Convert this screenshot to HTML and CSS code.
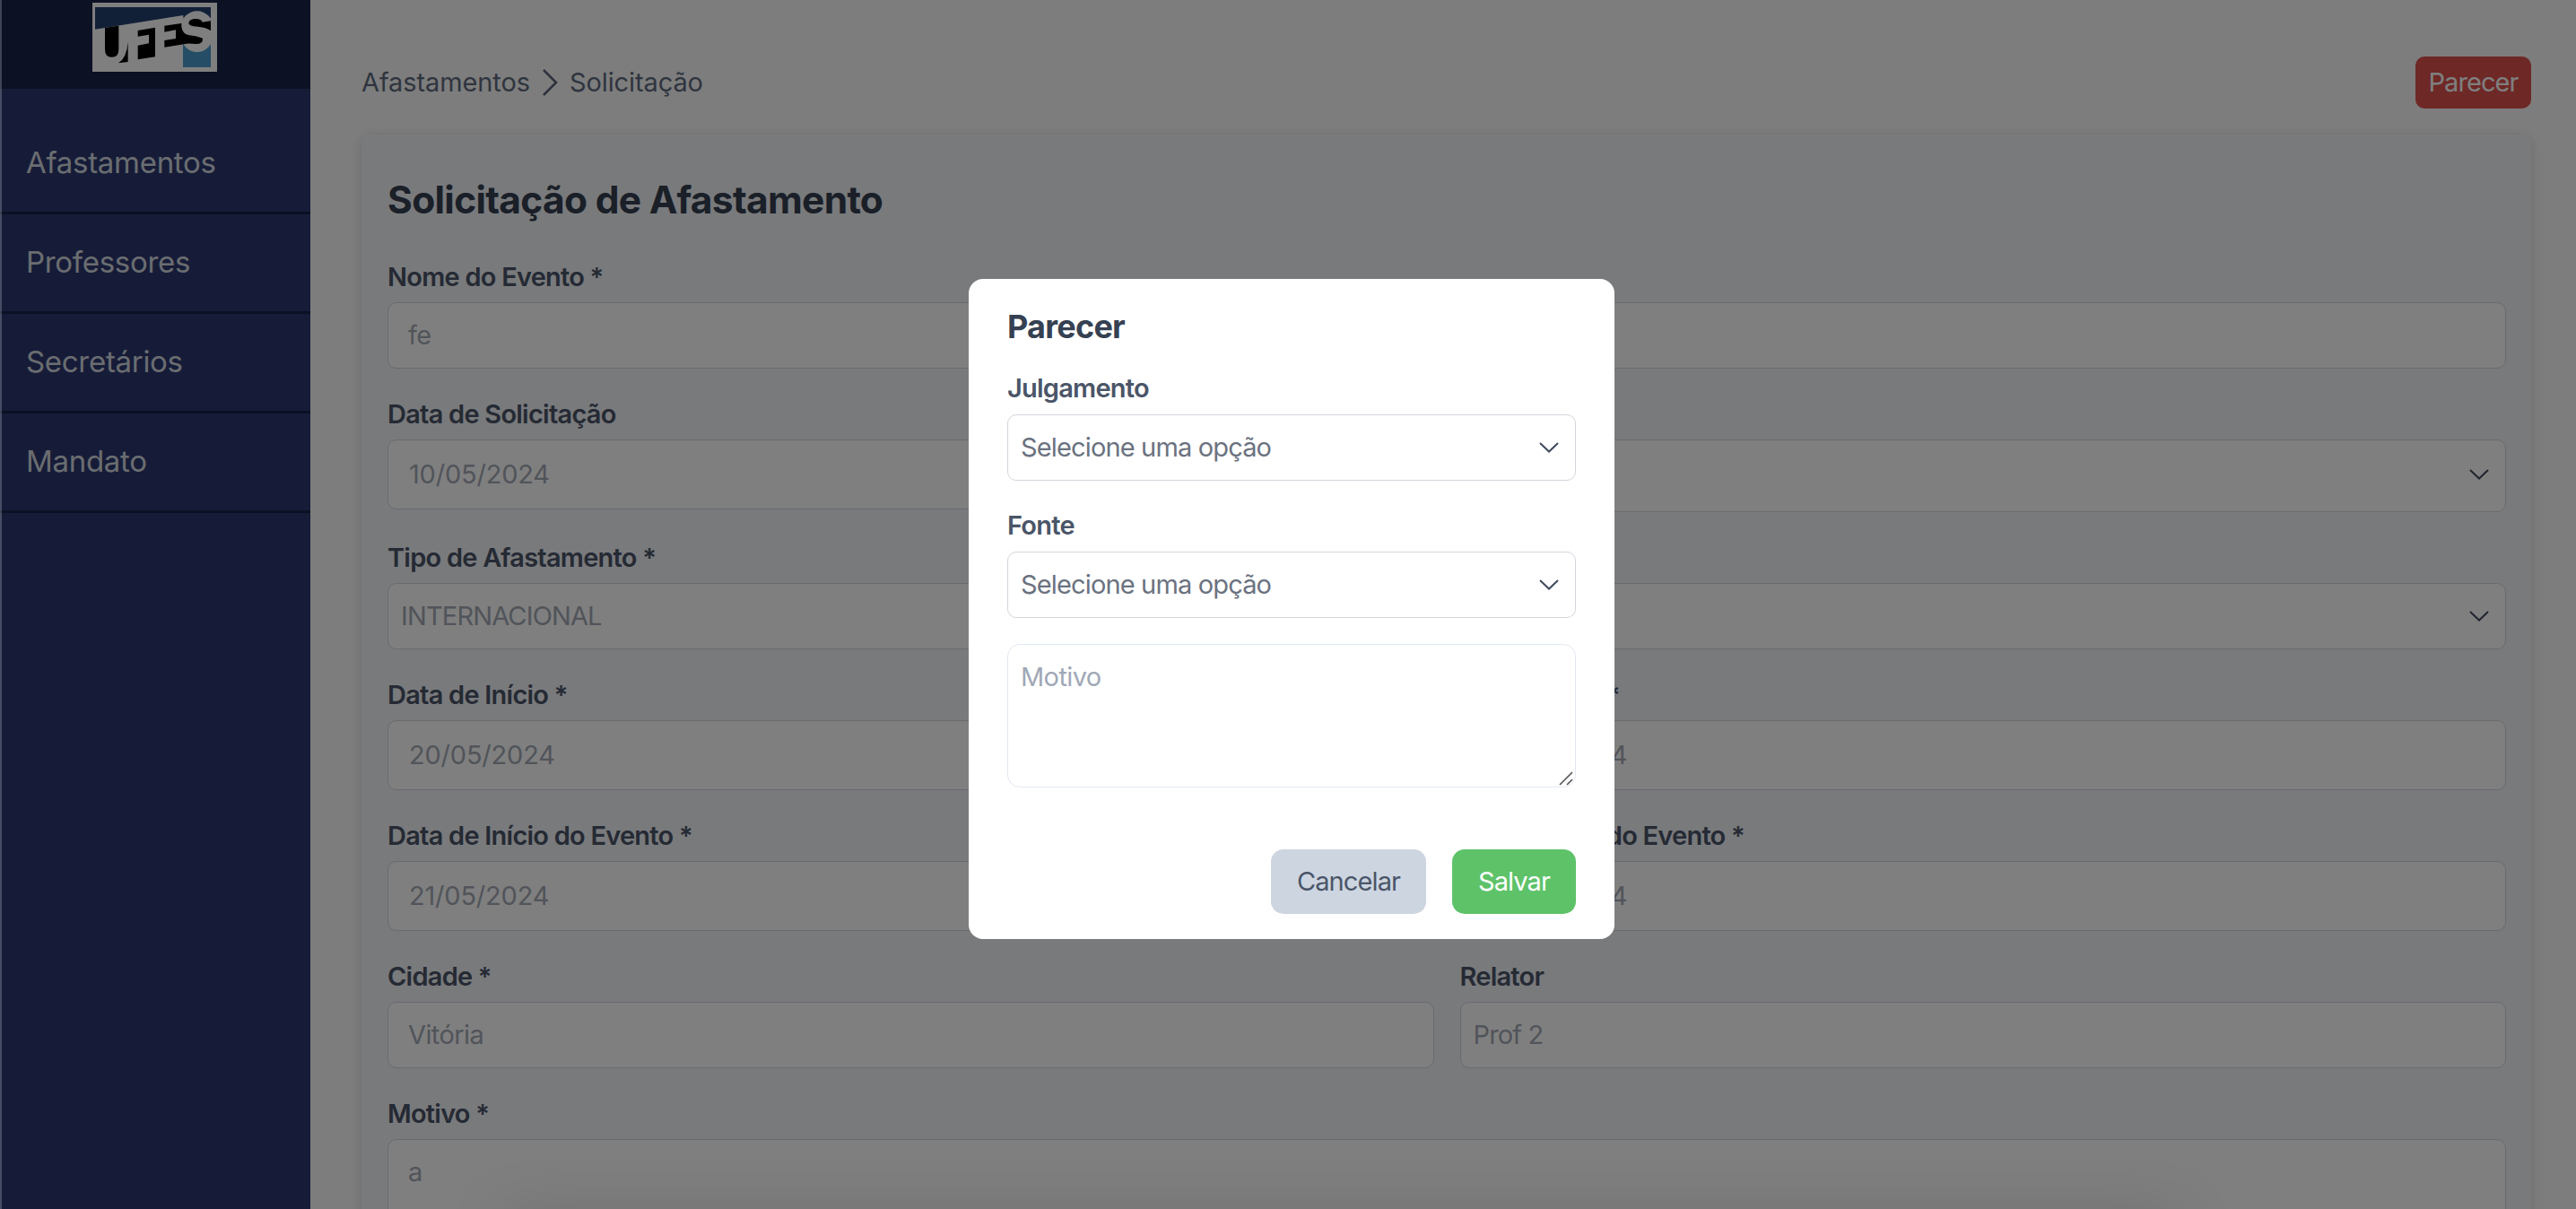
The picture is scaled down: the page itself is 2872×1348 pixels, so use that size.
FILE: index.html
```
<!DOCTYPE html>
<html lang="pt-BR">
<head>
<meta charset="utf-8">
<title>Solicitação de Afastamento</title>
<link rel="stylesheet" href="styles.css">
</head>
<body>
<div class="app">
  <aside class="sidebar">
    <div class="brand">
      <svg class="logo" viewBox="0 0 417 231" role="img" aria-label="UFES">
        <rect width="417" height="231" fill="#fff"/>
        <path d="M9 15H396V52H304V42L9 89Z" fill="#24406e"/>
        <rect x="303" y="130" width="93" height="86" fill="#4b9ccc"/>
        <path d="M42 84L88 77V155Q88 182 65 182Q42 182 42 155Z"/>
        <path d="M119 131V198L87 202Q115 184 119 131Z"/>
        <path d="M152 93L210 83V181L152 190V143L189 136V107L152 113Z"/>
        <circle cx="350" cy="82" r="54" fill="#fff"/>
        <circle cx="350" cy="112" r="53" fill="#fff"/>
        <path d="M241 77L298 69Q296 105 325 109Q350 111 369 119Q370 139 345 138Q325 135 315 137L241 149V126L279 120V91L241 98Z"/>
        <path d="M322 68Q324 54 346 54Q364 54 368 65L396 61V94Q386 84 352 80Q322 78 322 68Z"/>
      </svg>
    </div>
    <nav class="nav">
      <a class="nav-item">Afastamentos</a>
      <a class="nav-item">Professores</a>
      <a class="nav-item">Secretários</a>
      <a class="nav-item">Mandato</a>
    </nav>
  </aside>
  <main class="main">
    <header class="topbar">
      <div class="crumbs">
        <span>Afastamentos</span>
        <svg class="crumb-sep" viewBox="0 0 18 32"><path d="M2 2L16 16L2 30"/></svg>
        <span>Solicitação</span>
      </div>
      <button class="btn-parecer">Parecer</button>
    </header>
    <section class="card">
      <h1 class="title">Solicitação de Afastamento</h1>
      <div class="row">
        <div class="field"><label class="label">Nome do Evento *</label><div class="input">fe</div></div>
      </div>
      <div class="row">
        <div class="field"><label class="label">Data de Solicitação</label><div class="input date">10/05/2024</div></div>
        <div class="field"><label class="label">&nbsp;</label><div class="input status"><svg class="chevron" viewBox="0 0 22 12"><path d="M1 1L11 10.5L21 1"/></svg></div></div>
      </div>
      <div class="row">
        <div class="field"><label class="label">Tipo de Afastamento *</label><div class="input select">INTERNACIONAL</div></div>
        <div class="field"><label class="label">&nbsp;</label><div class="input select"><svg class="chevron" viewBox="0 0 22 12"><path d="M1 1L11 10.5L21 1"/></svg></div></div>
      </div>
      <div class="row">
        <div class="field"><label class="label">Data de Início *</label><div class="input date">20/05/2024</div></div>
        <div class="field"><label class="label">Data de Fim *</label><div class="input date">24/05/2024</div></div>
      </div>
      <div class="row">
        <div class="field"><label class="label">Data de Início do Evento *</label><div class="input date">21/05/2024</div></div>
        <div class="field"><label class="label">Data de Fim do Evento *</label><div class="input date">24/05/2024</div></div>
      </div>
      <div class="row">
        <div class="field"><label class="label">Cidade *</label><div class="input">Vitória</div></div>
        <div class="field"><label class="label">Relator</label><div class="input select">Prof 2</div></div>
      </div>
      <div class="row">
        <div class="field"><label class="label">Motivo *</label><div class="input area">a</div></div>
      </div>
    </section>
  </main>
</div>
<div class="overlay">
  <div class="modal">
    <h2 class="modal-title">Parecer</h2>
    <label class="modal-label">Julgamento</label>
    <div class="input select modal-select">Selecione uma opção<svg class="chevron" viewBox="0 0 22 12"><path d="M1 1L11 10.5L21 1"/></svg></div>
    <label class="modal-label second">Fonte</label>
    <div class="input select modal-select">Selecione uma opção<svg class="chevron" viewBox="0 0 22 12"><path d="M1 1L11 10.5L21 1"/></svg></div>
    <div class="textarea">Motivo<svg class="grip" viewBox="0 0 16 16"><path d="M1 15L15 1M9 15L15 9"/></svg></div>
    <div class="actions">
      <button class="btn cancel">Cancelar</button>
      <button class="btn save">Salvar</button>
    </div>
  </div>
</div>
<div class="edge"></div>
</body>
</html>
```
FILE: styles.css
```
* { box-sizing: border-box; }
html, body { height: 100%; }
body {
  margin: 0;
  overflow: hidden;
  font-family: Inter, "Liberation Sans", sans-serif;
  font-size: 29px;
  line-height: 44px;
  letter-spacing: -0.6px;
}
button { font: inherit; letter-spacing: -0.9px; border: 0; }
h1, h2 { margin: 0; }

.app { display: flex; height: 1348px; overflow: hidden; }

.sidebar { flex: none; width: 346px; background: #2d3870; }
.brand { height: 99px; padding: 3px 0 0 103px; background: #182349; }
.logo { display: block; width: 139px; height: 77px; }
.nav { padding-top: 29px; }
.nav-item {
  display: block;
  height: 111px;
  padding: 30px 0 0 29px;
  border-bottom: 3px solid #19204a;
  font-size: 33px;
  line-height: 46px;
  letter-spacing: -0.3px;
  color: #d5dae0;
}

.main { flex: 1; padding: 63px 50px 0 57px; background: #fafbfa; }
.topbar { display: flex; justify-content: space-between; align-items: center; height: 58px; }
.crumbs { display: flex; align-items: center; letter-spacing: -0.1px; color: #5f6b7e; }
.crumb-sep { width: 18px; height: 32px; margin: 0 13px; fill: none; stroke: #5a6578; stroke-width: 2.6; }
.btn-parecer {
  width: 129px;
  height: 58px;
  padding: 0;
  border-radius: 10px;
  background: #dd504c;
  color: #fff;
}

.card {
  height: 1300px;
  margin-top: 29px;
  padding: 47px 28px 0 29px;
  border-radius: 10px;
  background: #f2f4f8;
  box-shadow: 0 2px 14px rgba(0, 0, 0, 0.14);
}
.title {
  height: 90px;
  font-size: 42.5px;
  line-height: 52px;
  font-weight: 700;
  letter-spacing: -0.7px;
  color: #343f50;
}
.row { display: flex; gap: 29px; margin-bottom: 29px; }
.field { flex: 1; }
.label {
  display: block;
  height: 50px;
  padding-top: 2px;
  font-weight: 600;
  font-size: 29px;
  line-height: 40px;
  letter-spacing: -0.77px;
  color: #4a5568;
}
.input {
  display: flex;
  align-items: center;
  height: 74px;
  padding: 0 18px 0 22px;
  border: 1px solid #d2d6dc;
  border-radius: 10px;
  background: #fff;
  color: #a3a9b4;
}
.date { height: 78px; padding: 0 0 0 23px; letter-spacing: -0.2px; }
.status { height: 81px; padding-bottom: 2px; }
.select { padding-left: 14px; letter-spacing: -0.85px; }
.area { align-items: flex-start; height: 170px; padding-top: 14px; }
.chevron { width: 22px; height: 12px; margin-left: auto; margin-bottom: 1px; fill: none; stroke: #3f4a5c; stroke-width: 2; }

.overlay {
  position: absolute;
  inset: 0;
  overflow: hidden;
  display: flex;
  align-items: flex-start;
  justify-content: center;
  padding: 311px 0 0 8px;
  background: rgba(0, 0, 0, 0.5);
}
/* soft shade along the bottom of the window */
.overlay::after {
  content: "";
  position: absolute;
  left: 560px;
  right: 440px;
  bottom: -50px;
  height: 40px;
  box-shadow: 0 0 70px rgba(0, 0, 0, 0.16);
}
.modal {
  width: 720px;
  height: 736px;
  padding: 28px 43px 0;
  border-radius: 16px;
  background: #fff;
}
.modal-title {
  height: 73px;
  font-size: 36px;
  line-height: 50px;
  font-weight: 700;
  letter-spacing: -0.75px;
  color: #354152;
}
.modal-label {
  display: block;
  height: 50px;
  padding-top: 1px;
  line-height: 40px;
  font-weight: 600;
  letter-spacing: -0.77px;
  color: #4a5568;
}
.second { margin-top: 29px; }
.modal-select { color: #6b7280; }
.textarea {
  position: relative;
  height: 160px;
  margin-top: 29px;
  padding: 14px 14px;
  border: 1px solid #e2e8f0;
  border-radius: 14px;
  color: #a0a8b6;
}
.grip { position: absolute; right: 2px; bottom: 1px; width: 16px; height: 16px; fill: none; stroke: #555; stroke-width: 1.6; }
.actions { display: flex; justify-content: flex-end; gap: 29px; margin-top: 69px; }
.btn { height: 72px; padding: 0; border-radius: 14px; }
.cancel { width: 173px; background: #cdd5e1; color: #4a5568; }
.save { width: 138px; background: #5ec269; color: #fff; }

/* thin highlight along the left side of the window */
.edge { position: absolute; left: 0; top: 0; width: 2px; height: 100%; background: rgba(160, 165, 180, 0.35); }
```
